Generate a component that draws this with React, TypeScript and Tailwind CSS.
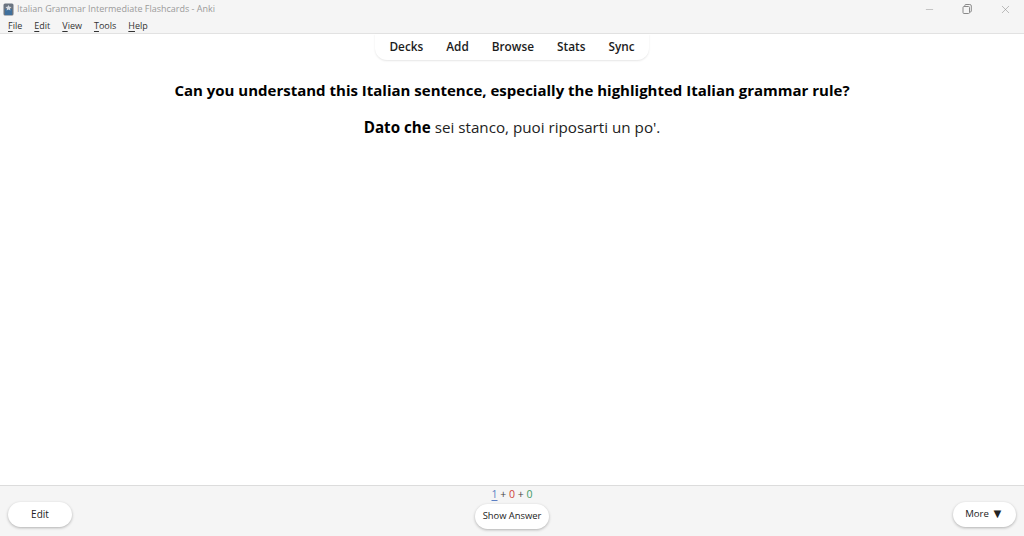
import { Minus, X } from "lucide-react"

function AppIcon() {
  return (
    <svg width="11" height="13" viewBox="0 0 11 13" className="shrink-0">
      <rect x="0.5" y="0.5" width="10" height="12" rx="1.5" fill="#6b7480" />
      <rect x="2" y="6" width="7" height="6" fill="#3f6f9c" />
      <path d="M5.5 2l1 1.8 2 .3-1.5 1.4.4 2-1.9-1-1.9 1 .4-2L2.5 4.1l2-.3z" fill="#d5dbe2" />
    </svg>
  )
}

function MenuItem({ label }: { label: string }) {
  // first letter is the underlined mnemonic
  return (
    <span>
      <span className="underline underline-offset-2">{label[0]}</span>
      {label.slice(1)}
    </span>
  )
}

function PillButton({ children, className }: { children: React.ReactNode; className: string }) {
  return (
    <button className={`flex items-center justify-center rounded-[14px] bg-white font-medium text-[#222] shadow-[0_1px_3px_rgba(0,0,0,0.28)] ${className}`}>
      {children}
    </button>
  )
}

export default function App() {
  const links = ["Decks", "Add", "Browse", "Stats", "Sync"]

  return (
    <div className="flex h-[536px] w-[1024px] flex-col overflow-hidden bg-white font-['Open_Sans',sans-serif]">
      <div className="border-b border-[#e2e2e2] bg-[#f5f5f5]">
        <div className="flex h-[18px] items-center justify-between">
          <div className="flex items-center gap-[3px] pl-[3px] text-[9px] text-[#9b9b9b]">
            <AppIcon />
            <span>Italian Grammar Intermediate Flashcards - Anki</span>
          </div>
          <div className="flex items-center gap-[27px] pr-[12px] text-[#8a8a8a]">
            <Minus size={11} strokeWidth={1} />
            <svg width="10" height="10" viewBox="0 0 10 10" fill="none" stroke="currentColor" strokeWidth="1">
              <rect x="1" y="2.5" width="6.5" height="7" rx="1" />
              <path d="M2.8 2.5V1.5a1 1 0 0 1 1-1h4a1.5 1.5 0 0 1 1.5 1.5v5a1 1 0 0 1-1 1h-.8" />
            </svg>
            <X size={13} strokeWidth={1} />
          </div>
        </div>
        <div className="flex h-[15px] items-center gap-[12px] pt-[1px] pl-[8px] text-[9px] text-[#333]">
          {["File", "Edit", "View", "Tools", "Help"].map((m) => (
            <MenuItem key={m} label={m} />
          ))}
        </div>
      </div>

      <div className="flex justify-center">
        <nav className="flex h-[26px] w-[274px] items-center justify-center gap-[23px] rounded-b-[12px] bg-white text-[11.8px] font-semibold text-[#1c1c1c] shadow-[0_1px_2px_rgba(0,0,0,0.1)]">
          {links.map((l) => (
            <span key={l}>{l}</span>
          ))}
        </nav>
      </div>

      <main className="flex-1 pt-[17px] text-center text-black">
        <h1 className="text-[15px] leading-[26px] font-bold">
          Can you understand this Italian sentence, especially the highlighted Italian grammar rule?
        </h1>
        <p className="mt-[11px] text-[15.2px] leading-[26px] text-[#222]">
          <b className="text-black">Dato che</b> sei stanco, puoi riposarti un po'.
        </p>
      </main>

      <footer className="relative h-[51px] border-t border-[#dcdcdc] bg-[#f5f5f5]">
        <div className="flex items-start justify-between px-[8px] pt-[16px]">
          <PillButton className="h-[25px] w-[64px] text-[10px]">Edit</PillButton>
          <PillButton className="h-[25px] w-[63px] gap-[2px] text-[9.6px]">
            More <span className="-mt-[2px] text-[13px] leading-none">▼</span>
          </PillButton>
        </div>
        <div className="absolute top-0 left-0 flex w-full flex-col items-center">
          <div className="text-[10.5px] leading-[17px] text-[#444]">
            <span className="text-[#5b7fc4] underline underline-offset-2">1</span> + <span className="text-[#cf3f3a]">0</span> + <span className="text-[#3f9a66]">0</span>
          </div>
          <PillButton className="mt-[1px] h-[25px] w-[74px] text-[9.4px]">Show Answer</PillButton>
        </div>
      </footer>
    </div>
  )
}
